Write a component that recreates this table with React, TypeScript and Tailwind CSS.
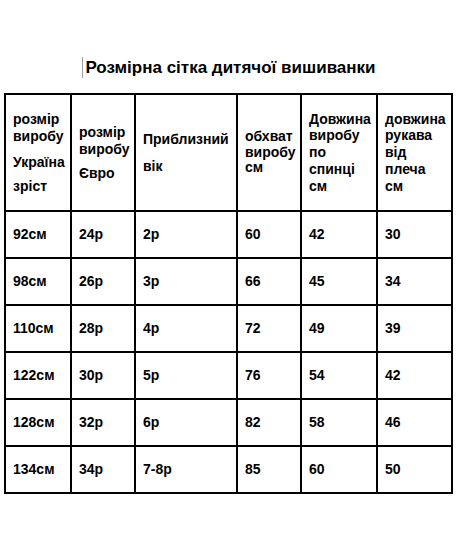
import React from 'react';

const rows = [
  ['92см', '24р', '2р', '60', '42', '30'],
  ['98см', '26р', '3р', '66', '45', '34'],
  ['110см', '28р', '4р', '72', '49', '39'],
  ['122см', '30р', '5р', '76', '54', '42'],
  ['128см', '32р', '6р', '82', '58', '46'],
  ['134см', '34р', '7-8р', '85', '60', '50'],
];

const widths = ['w-[66px]', 'w-[64px]', 'w-[102px]', 'w-[64px]', 'w-[76px]', 'w-[75px]'];

const App = () => {
  return (
    <div className="w-[458px] h-[546px] bg-white text-black font-['Liberation_Sans',Arial,sans-serif] font-bold">
      {/* Title */}
      <div className="pt-[57px] h-[93px] flex justify-center">
        <div className="flex items-start">
          <span className="block w-px h-[21px] bg-gray-400 mr-[2px]" />
          <h1 className="text-[17px] leading-[21px] font-bold">Розмірна сітка дитячої вишиванки</h1>
        </div>
      </div>

      {/* Table */}
      <table className="ml-[4px] border-collapse table-fixed w-[447px] text-[14px]">
        <thead>
          <tr className="h-[117px]">
            <th className={`${widths[0]} border-2 border-black text-left font-bold align-middle pl-[7px]`}>
              <div className="leading-[17px]">розмір</div>
              <div className="leading-[17px]">виробу</div>
              <div className="leading-[17px] mt-[9px]">Україна</div>
              <div className="leading-[17px] mt-[7px]">зріст</div>
            </th>
            <th className={`${widths[1]} border-2 border-black text-left font-bold align-middle pl-[7px]`}>
              <div className="leading-[17px]">розмір</div>
              <div className="leading-[17px]">виробу</div>
              <div className="leading-[17px] mt-[7px]">Євро</div>
            </th>
            <th className={`${widths[2]} border-2 border-black text-left font-bold align-middle pl-[7px]`}>
              <div className="leading-[17px]">Приблизний</div>
              <div className="leading-[17px] mt-[10px]">вік</div>
            </th>
            <th className={`${widths[3]} border-2 border-black text-left font-bold align-middle pl-[7px]`}>
              <div className="leading-[15.5px]">обхват</div>
              <div className="leading-[15.5px]">виробу</div>
              <div className="leading-[15.5px]">см</div>
            </th>
            <th className={`${widths[4]} border-2 border-black text-left font-bold align-middle pl-[7px]`}>
              <div className="leading-[16.75px]">Довжина</div>
              <div className="leading-[16.75px]">виробу</div>
              <div className="leading-[16.75px]">по</div>
              <div className="leading-[16.75px]">спинці</div>
              <div className="leading-[16.75px]">см</div>
            </th>
            <th className={`${widths[5]} border-2 border-black text-left font-bold align-middle pl-[7px]`}>
              <div className="leading-[16.75px]">довжина</div>
              <div className="leading-[16.75px]">рукава</div>
              <div className="leading-[16.75px]">від</div>
              <div className="leading-[16.75px]">плеча</div>
              <div className="leading-[16.75px]">см</div>
            </th>
          </tr>
        </thead>
        <tbody>
          {rows.map((row, i) => (
            <tr key={i} className="h-[47px]">
              {row.map((cell, j) => (
                <td key={j} className="border-2 border-black pl-[7px] align-middle leading-[17px]">
                  {cell}
                </td>
              ))}
            </tr>
          ))}
        </tbody>
      </table>
    </div>
  );
};

export default App;
